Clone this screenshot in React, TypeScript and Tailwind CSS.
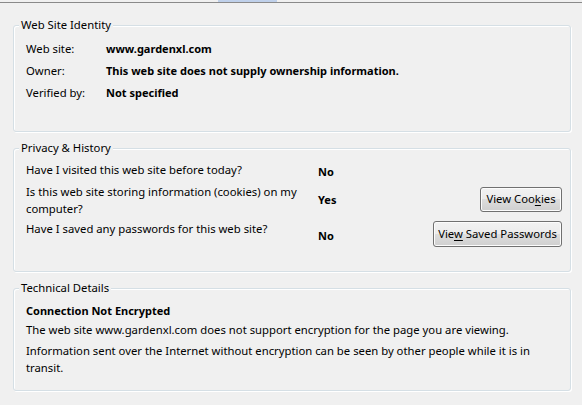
const font = '[font-family:"Noto_Sans","Open_Sans",sans-serif]'

function GroupBox({
  title,
  className,
  children,
}: {
  title: string
  className: string
  children: React.ReactNode
}) {
  return (
    <fieldset
      className={`rounded-[3px] border border-[#d5dfe5] shadow-[inset_1px_1px_0_#ffffff,1px_1px_0_#ffffff] ${className}`}
    >
      <legend className="ml-[5px] px-[2px] leading-[16px] bg-[#f0f0f0]">{title}</legend>
      {children}
    </fieldset>
  )
}

function WinButton({ children, className }: { children: React.ReactNode; className: string }) {
  return (
    <button
      className={`flex items-center justify-center rounded-[3px] border border-[#707070] bg-[linear-gradient(#f2f2f2_0%,#ebebeb_50%,#dddddd_50%,#cfcfcf_100%)] shadow-[inset_0_0_0_1px_#fcfcfc] text-black leading-[16px] ${className}`}
    >
      {children}
    </button>
  )
}

export default function App() {
  return (
    <div className={`w-[582px] h-[405px] bg-[#f0f0f0] text-[11.3px] text-black overflow-hidden ${font}`}>
      {/* tab strip edge */}
      <div className="h-[2px] flex">
        <div className="ml-[218px] w-[59px] bg-[#bfd0ea]" />
      </div>
      <div className="h-px bg-[#8a8a8a]" />

      <div className="pl-[13px] pr-[11px] flex flex-col">
        <GroupBox title="Web Site Identity" className="mt-[14px] h-[115px]">
          <div className="pt-[5px] pl-[12px] flex flex-col">
            <div className="h-[22px] flex items-center">
              <span className="w-[80px]">Web site:</span>
              <span className="font-bold text-[11px]">www.gardenxl.com</span>
            </div>
            <div className="h-[22px] flex items-center">
              <span className="w-[80px]">Owner:</span>
              <span className="font-bold text-[11px]">This web site does not supply ownership information.</span>
            </div>
            <div className="h-[23px] flex items-center">
              <span className="w-[80px]">Verified by:</span>
              <span className="font-bold text-[11px]">Not specified</span>
            </div>
          </div>
        </GroupBox>

        <GroupBox title="Privacy & History" className="mt-[8px] h-[132px]">
          <div className="pt-[5px] pl-[12px] pr-[8px] grid grid-cols-[292px_1fr_auto]">
            <div className="h-[18px] flex items-center">Have I visited this web site before today?</div>
            <div className="h-[18px] flex items-center pt-[4px] font-bold text-[11px]">No</div>
            <div />

            <div className="mt-[7px] h-[28px] flex flex-col justify-center leading-[17px] whitespace-nowrap">
              <span>Is this web site storing information (cookies) on my</span>
              <span>computer?</span>
            </div>
            <div className="mt-[7px] h-[28px] flex items-center font-bold text-[11px]">Yes</div>
            <div className="mt-[6px] h-[28px] flex items-center justify-end">
              <WinButton className="w-[82px] h-[25px]">
                <span>
                  View Coo<span className="underline underline-offset-2">k</span>ies
                </span>
              </WinButton>
            </div>

            <div className="mt-[7px] h-[26px] leading-[16px]">Have I saved any passwords for this web site?</div>
            <div className="mt-[7px] h-[26px] flex items-center pt-[4px] font-bold text-[11px]">No</div>
            <div className="mt-[7px] h-[26px] flex items-center justify-end">
              <WinButton className="w-[129px] h-[26px]">
                <span>
                  Vie<span className="underline underline-offset-2">w</span> Saved Passwords
                </span>
              </WinButton>
            </div>
          </div>
        </GroupBox>

        <GroupBox title="Technical Details" className="mt-[8px] h-[111px]">
          <div className="pt-[7px] pl-[12px] flex flex-col">
            <div className="leading-[16px] font-bold text-[11px]">Connection Not Encrypted</div>
            <div className="mt-[3px] leading-[16px] whitespace-nowrap">
              The web site www.gardenxl.com does not support encryption for the page you are viewing.
            </div>
            <div className="mt-[4px] leading-[17px] whitespace-nowrap flex flex-col">
              <span>Information sent over the Internet without encryption can be seen by other people while it is in</span>
              <span>transit.</span>
            </div>
          </div>
        </GroupBox>
      </div>
    </div>
  )
}
